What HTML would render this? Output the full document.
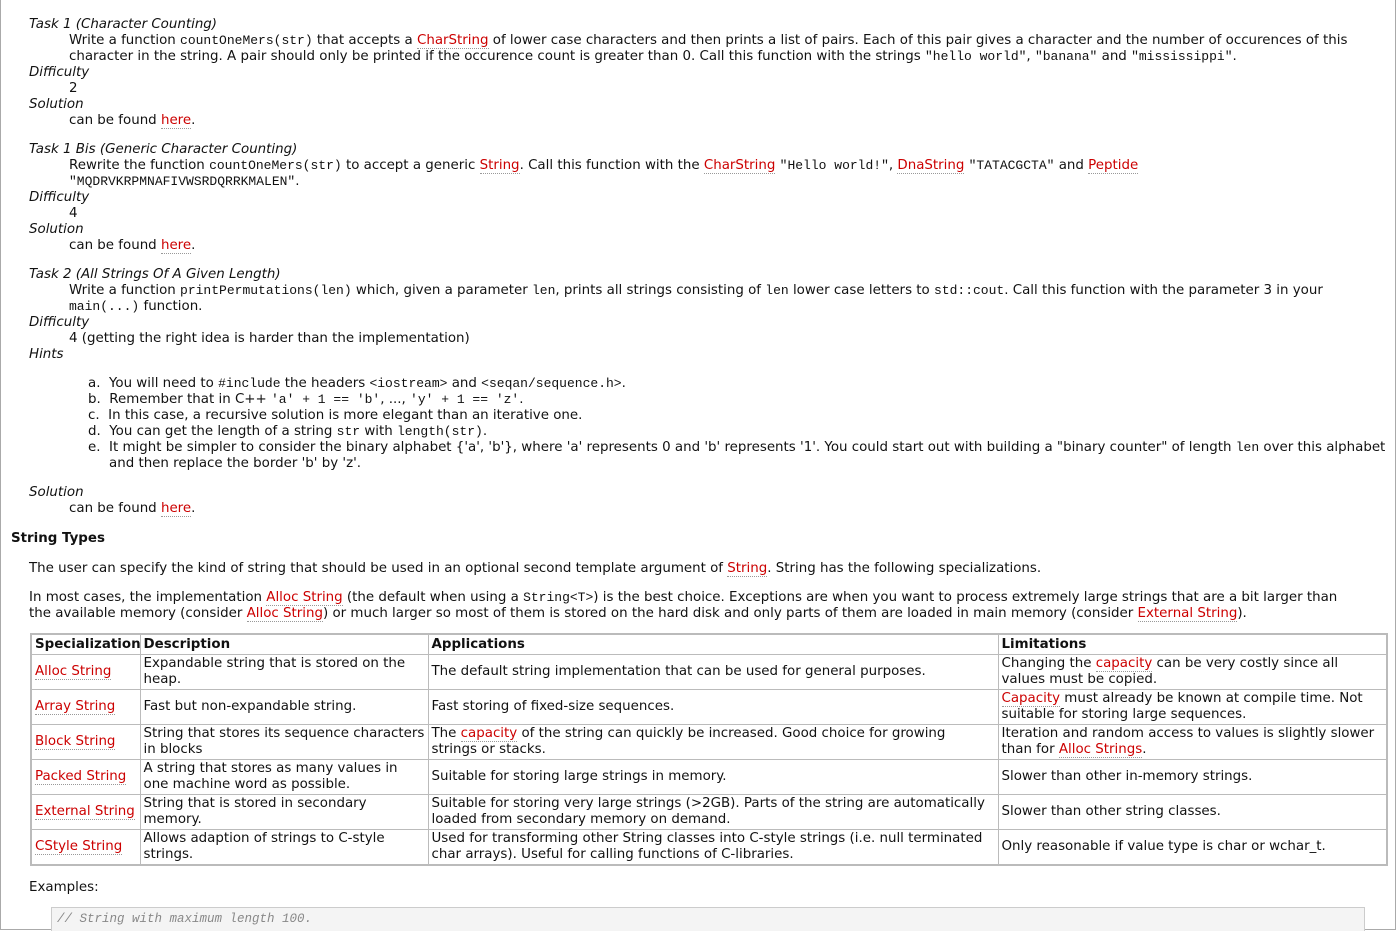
<!DOCTYPE html>
<html><head><meta charset="utf-8"><style>
html,body{margin:0;padding:0;background:#fff;overflow:hidden}
body{width:1397px;height:931px;position:relative;overflow:hidden;font-family:"DejaVu Sans","Liberation Sans",sans-serif;font-size:13.4px;color:#111}
.frame{position:absolute;left:0;top:-2px;width:1396px;height:932px;border:1px solid #aaa;box-sizing:border-box}
.l{position:absolute;white-space:nowrap;line-height:16px;margin-top:1.5px}
i{font-style:italic}
code{font-family:"Liberation Mono",monospace;font-size:13px}
a{color:#c00;text-decoration:none;border-bottom:1px dotted #999}
table{position:absolute;left:30px;top:633px;border-collapse:collapse;border:2px solid #bbb;table-layout:fixed;width:1356px}
td,th{border:1px solid #bbb;padding:0 3px;line-height:16px;text-align:left;vertical-align:middle;font-size:13.4px;overflow:hidden}
th{height:19px;font-weight:bold}
td{height:34px}
.code{position:absolute;left:51px;top:907px;width:1312px;height:40px;background:#f4f4f4;border:1px solid #ccc}
.code span{position:absolute;left:5px;top:4px;font-family:"Liberation Mono",monospace;font-style:italic;font-size:12.5px;color:#888}
</style></head><body>
<div class="frame"></div>
<div class="l" style="left:29px;top:15px"><i>Task 1 (Character Counting)</i></div>
<div class="l" style="left:69px;top:31px">Write a function <code>countOneMers(str)</code> that accepts a <a>CharString</a> of lower case characters and then prints a list of pairs. Each of this pair gives a character and the number of occurences of this</div>
<div class="l" style="left:69px;top:47px">character in the string. A pair should only be printed if the occurence count is greater than 0. Call this function with the strings <code>"hello world"</code>, <code>"banana"</code> and <code>"mississippi"</code>.</div>
<div class="l" style="left:29px;top:63px"><i>Difficulty</i></div>
<div class="l" style="left:69px;top:79px">2</div>
<div class="l" style="left:29px;top:95px"><i>Solution</i></div>
<div class="l" style="left:69px;top:111px">can be found <a>here</a>.</div>

<div class="l" style="left:29px;top:140px"><i>Task 1 Bis (Generic Character Counting)</i></div>
<div class="l" style="left:69px;top:156px">Rewrite the function <code>countOneMers(str)</code> to accept a generic <a>String</a>. Call this function with the <a>CharString</a> <code>"Hello world!"</code>, <a>DnaString</a> <code>"TATACGCTA"</code> and <a>Peptide</a></div>
<div class="l" style="left:69px;top:172px"><code>"MQDRVKRPMNAFIVWSRDQRRKMALEN"</code>.</div>
<div class="l" style="left:29px;top:188px"><i>Difficulty</i></div>
<div class="l" style="left:69px;top:204px">4</div>
<div class="l" style="left:29px;top:220px"><i>Solution</i></div>
<div class="l" style="left:69px;top:236px">can be found <a>here</a>.</div>

<div class="l" style="left:29px;top:265px"><i>Task 2 (All Strings Of A Given Length)</i></div>
<div class="l" style="left:69px;top:281px">Write a function <code>printPermutations(len)</code> which, given a parameter <code>len</code>, prints all strings consisting of <code>len</code> lower case letters to <code>std::cout</code>. Call this function with the parameter 3 in your</div>
<div class="l" style="left:69px;top:297px"><code>main(...)</code> function.</div>
<div class="l" style="left:29px;top:313px"><i>Difficulty</i></div>
<div class="l" style="left:69px;top:329px">4 (getting the right idea is harder than the implementation)</div>
<div class="l" style="left:29px;top:345px"><i>Hints</i></div>
<div class="l" style="left:88px;top:374px">a.&nbsp; You will need to <code>#include</code> the headers <code>&lt;iostream&gt;</code> and <code>&lt;seqan/sequence.h&gt;</code>.</div>
<div class="l" style="left:88px;top:390px">b.&nbsp; Remember that in C++ <code>'a' + 1 == 'b'</code>, ..., <code>'y' + 1 == 'z'</code>.</div>
<div class="l" style="left:88px;top:406px">c.&nbsp; In this case, a recursive solution is more elegant than an iterative one.</div>
<div class="l" style="left:88px;top:422px">d.&nbsp; You can get the length of a string <code>str</code> with <code>length(str)</code>.</div>
<div class="l" style="left:88px;top:438px">e.&nbsp; It might be simpler to consider the binary alphabet {'a', 'b'}, where 'a' represents 0 and 'b' represents '1'. You could start out with building a "binary counter" of length <code>len</code> over this alphabet</div>
<div class="l" style="left:109px;top:454px">and then replace the border 'b' by 'z'.</div>
<div class="l" style="left:29px;top:483px"><i>Solution</i></div>
<div class="l" style="left:69px;top:499px">can be found <a>here</a>.</div>

<div class="l" style="left:11px;top:529px;font-weight:bold">String Types</div>
<div class="l" style="left:29px;top:559px">The user can specify the kind of string that should be used in an optional second template argument of <a>String</a>. String has the following specializations.</div>
<div class="l" style="left:29px;top:588px">In most cases, the implementation <a>Alloc String</a> (the default when using a <code>String&lt;T&gt;</code>) is the best choice. Exceptions are when you want to process extremely large strings that are a bit larger than</div>
<div class="l" style="left:29px;top:604px">the available memory (consider <a>Alloc String</a>) or much larger so most of them is stored on the hard disk and only parts of them are loaded in main memory (consider <a>External String</a>).</div>

<table>
<colgroup><col style="width:109px"><col style="width:288px"><col style="width:570px"><col style="width:389px"></colgroup>
<tr><th>Specialization</th><th>Description</th><th>Applications</th><th>Limitations</th></tr>
<tr><td><a>Alloc String</a></td><td>Expandable string that is stored on the<br>heap.</td><td>The default string implementation that can be used for general purposes.</td><td>Changing the <a>capacity</a> can be very costly since all<br>values must be copied.</td></tr>
<tr><td><a>Array String</a></td><td>Fast but non-expandable string.</td><td>Fast storing of fixed-size sequences.</td><td><a>Capacity</a> must already be known at compile time. Not<br>suitable for storing large sequences.</td></tr>
<tr><td><a>Block String</a></td><td>String that stores its sequence characters<br>in blocks</td><td>The <a>capacity</a> of the string can quickly be increased. Good choice for growing<br>strings or stacks.</td><td>Iteration and random access to values is slightly slower<br>than for <a>Alloc Strings</a>.</td></tr>
<tr><td><a>Packed String</a></td><td>A string that stores as many values in<br>one machine word as possible.</td><td>Suitable for storing large strings in memory.</td><td>Slower than other in-memory strings.</td></tr>
<tr><td><a>External String</a></td><td>String that is stored in secondary<br>memory.</td><td>Suitable for storing very large strings (&gt;2GB). Parts of the string are automatically<br>loaded from secondary memory on demand.</td><td>Slower than other string classes.</td></tr>
<tr><td><a>CStyle String</a></td><td>Allows adaption of strings to C-style<br>strings.</td><td>Used for transforming other String classes into C-style strings (i.e. null terminated<br>char arrays). Useful for calling functions of C-libraries.</td><td>Only reasonable if value type is char or wchar_t.</td></tr>
</table>

<div class="l" style="left:29px;top:878px">Examples:</div>
<div class="code"><span>// String with maximum length 100.</span></div>
</body></html>
